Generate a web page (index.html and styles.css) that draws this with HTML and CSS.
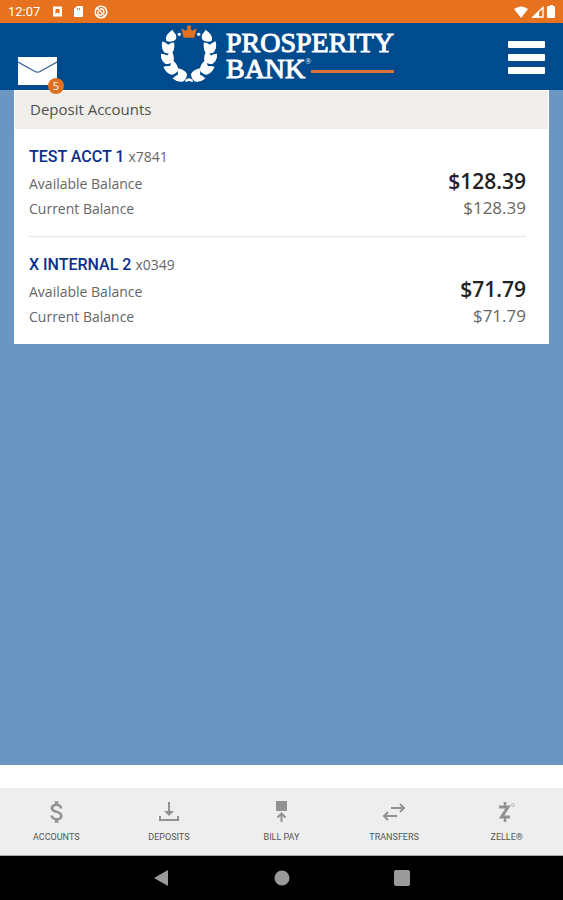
FILE: index.html
```html
<!DOCTYPE html>
<html lang="en">
<head>
<meta charset="utf-8">
<meta name="viewport" content="width=device-width, initial-scale=1">
<title>Prosperity Bank</title>
<link rel="stylesheet" href="styles.css">
</head>
<body>
<div class="status">
  <div class="status-group">
    <span class="clock">12:07</span>
    <svg width="11" height="11" viewBox="0 0 11 11"><path fill="#fff" fill-rule="evenodd" d="M1 .5h9v10H1zM3.500 3v5l2-1.500 2 1.500V3z"/></svg>
    <svg width="11" height="13" viewBox="0 0 11 13"><path fill="#fff" fill-rule="evenodd" d="M4 1h5q1 0 1 1v9q0 1-1 1H2q-1 0-1-1V4zM4 3v2h1V3zM6 3v2h1V3z"/></svg>
    <svg width="14" height="14" viewBox="0 0 14 14" fill="none" stroke="#fff" stroke-width="1.5"><circle cx="7" cy="7" r="5.8"/><path d="M3 3l8 8M4 6v4h4M6 4q4-1 4 4"/></svg>
  </div>
  <div class="status-group signals">
    <svg width="14" height="12" viewBox="0 0 14 12"><path fill="#fff" d="M0 3Q7-2 14 3L7 12z"/></svg>
    <svg width="13" height="12" viewBox="0 0 13 12"><path fill="none" stroke="#fff" stroke-width="1.4" d="M2 11L12 1.500V11z"/><path fill="#fff" d="M1 11.500L8 5v6.500z"/></svg>
    <svg width="9" height="13" viewBox="0 0 9 13"><path fill="#fff" d="M3 0h3v1h1q1 0 1 1v10q0 1-1 1H1q-1 0-1-1V2q0-1 1-1h2z"/></svg>
  </div>
</div>

<header class="header">
  <button class="mail" type="button" aria-label="Messages, 5 unread">
    <svg width="39" height="28" viewBox="0 0 39 28"><path fill="#fff" d="M0 0h39v28H0z"/><path fill="none" stroke="#2f5f98" stroke-width="1.2" d="M0 5l17 9.500q2.500 1.300 5 0L39 5"/></svg>
    <span class="badge">5</span>
  </button>
  <a class="logo" href="#" aria-label="Prosperity Bank">
    <svg class="wreath" width="56" height="59" viewBox="29 14 168 177">
      <defs>
        <path id="leaf" d="M-18-18Q-8-15 0-9Q7-16 17-17Q22 3 14 14Q3 20-10 15Q-22 4-18-18z"/>
        <g id="branch" fill="#fff">
          <path d="M64 28Q66 36 71 39Q79 51 71 60Q59 67 45 62Q38 44 64 28z"/>
          <circle cx="84" cy="42" r="5"/>
          <use href="#leaf" transform="translate(50 82) rotate(4)"/>
          <use href="#leaf" transform="translate(49 114) rotate(-12)"/>
          <use href="#leaf" transform="translate(61 145) rotate(-32)"/>
          <use href="#leaf" transform="translate(88 167) rotate(-62)"/>
          <path d="M102 178l11-5v9l-11 3z"/>
        </g>
      </defs>
      <use href="#branch"/>
      <use href="#branch" transform="translate(226 0) scale(-1 1)"/>
      <path fill="#e4701e" d="M97 52l-7-28 13 7 6-5-3-7 7-5 7 5-3 7 6 5 13-7-7 28z"/>
    </svg>
    <span class="wordmark">
      <span class="word">PROSPERITY</span>
      <span class="word word-line">BANK<sup class="reg">®</sup><span class="rule"></span></span>
    </span>
  </a>
  <button class="menu" type="button" aria-label="Menu">
    <span></span><span></span><span></span>
  </button>
</header>

<main class="main">
  <section class="card">
    <h1 class="card-title">Deposit Accounts</h1>
    <article class="account">
      <h2 class="name"><a href="#">TEST ACCT 1</a> <span class="number">x7841</span></h2>
      <dl class="balances">
        <dt>Available Balance</dt><dd class="available">$128.39</dd>
        <dt>Current Balance</dt><dd>$128.39</dd>
      </dl>
    </article>
    <article class="account">
      <h2 class="name"><a href="#">X INTERNAL 2</a> <span class="number">x0349</span></h2>
      <dl class="balances">
        <dt>Available Balance</dt><dd class="available">$71.79</dd>
        <dt>Current Balance</dt><dd>$71.79</dd>
      </dl>
    </article>
  </section>
</main>

<nav class="tabs">
  <a href="#"><svg width="24" height="24" viewBox="1 2 20 20"><path fill="#929292" d="M11.800 10.900c-2.270-.59-3-1.200-3-2.150 0-1.090 1.010-1.850 2.700-1.850 1.780 0 2.440.85 2.500 2.100h2.210c-.07-1.720-1.120-3.300-3.210-3.810V3h-3v2.160c-1.940.42-3.500 1.680-3.500 3.610 0 2.310 1.910 3.460 4.700 4.130 2.500.6 3 1.480 3 2.410 0 .69-.49 1.790-2.700 1.790-2.060 0-2.870-.92-2.980-2.100h-2.200c.12 2.190 1.760 3.420 3.680 3.830V21h3v-2.150c1.950-.37 3.500-1.500 3.500-3.550 0-2.840-2.430-3.810-4.700-4.400z"/></svg>ACCOUNTS</a>
  <a href="#"><svg width="24" height="24" viewBox="0 0 24 24" fill="none" stroke="#929292" stroke-width="2"><path d="M12 2v11M3 16v4h18v-4"/><path fill="#929292" stroke="none" d="M7 11h10l-5 5z"/></svg>DEPOSITS</a>
  <a href="#"><svg width="24" height="24" viewBox="0 0 24 24" fill="#929292"><path d="M7 1h11v10H7z"/><path fill="none" stroke="#929292" stroke-width="2" d="M12.500 22v-8M8.500 17.500l4-4 4 4"/></svg>BILL PAY</a>
  <a href="#"><svg width="24" height="24" viewBox="0 0 24 24" fill="none" stroke="#929292" stroke-width="2"><path d="M9 8h12M18 4l4 4-4 4M15 16H3M6 12l-4 4 4 4"/></svg>TRANSFERS</a>
  <a href="#"><svg width="24" height="24" viewBox="0 0 24 24" fill="none" stroke="#929292"><path stroke-width="3" d="M4 7h9L6.500 17H15"/><path stroke-width="2.500" d="M10 2v4M10 18v4"/><circle cx="18" cy="5" r="1.500" stroke="#bbb"/></svg>ZELLE®</a>
</nav>

<div class="system">
  <button type="button" aria-label="Back"><svg width="16" height="16" viewBox="0 0 16 16"><path fill="#9a9a9a" d="M0 8L14 0v16z"/></svg></button>
  <button type="button" aria-label="Home"><svg width="16" height="16" viewBox="0 0 16 16"><circle fill="#9a9a9a" cx="8" cy="8" r="7.500"/></svg></button>
  <button type="button" aria-label="Recent apps"><svg width="16" height="16" viewBox="0 0 16 16"><rect fill="#9a9a9a" width="16" height="16" rx="2"/></svg></button>
</div>
</body>
</html>
```
FILE: styles.css
```css
* { box-sizing: border-box; }

body {
  margin: 0;
  min-height: 100vh;
  display: flex;
  flex-direction: column;
  background: #fff;
  font-family: "Open Sans", "Noto Sans", sans-serif;
  color: #666;
}

a { color: inherit; text-decoration: none; }

button {
  padding: 0;
  border: 0;
  background: none;
  font: inherit;
  cursor: pointer;
}

svg { display: block; }

.status {
  display: flex;
  justify-content: space-between;
  height: 23px;
  padding: 0 7px 0 8px;
  background: #e6711e;
  color: #fff;
}

.status-group { display: flex; align-items: center; gap: 10px; }
.signals { gap: 3px; }

.clock {
  margin-right: 2px;
  font: 13px/20px Roboto, sans-serif;
}

.header {
  position: relative;
  z-index: 1;
  display: grid;
  grid-template-columns: 1fr auto 1fr;
  height: 67px;
  padding: 0 18px;
  background: #004b8d;
}

.mail {
  position: relative;
  align-self: end;
  justify-self: start;
  margin-bottom: 5px;
}

.badge {
  position: absolute;
  right: -7px;
  bottom: -9px;
  width: 16px;
  height: 16px;
  border-radius: 50%;
  background: #e0701f;
  color: #fff;
  font: 11px/16px "Open Sans", sans-serif;
  text-align: center;
}

.logo {
  display: flex;
  gap: 9px;
  padding: 2px 8px 0 0;
}

.wordmark {
  display: flex;
  flex-direction: column;
  padding-top: 5px;
}

.word {
  color: #fff;
  font: 28px/26px "Liberation Serif", serif;
  -webkit-text-stroke: 1px #fff;
}

.word-line { display: flex; align-items: center; }

.reg {
  align-self: flex-start;
  font-size: 8px;
  line-height: 12px;
  -webkit-text-stroke: 0;
}

.rule {
  flex: 1;
  height: 3px;
  margin-top: 4px;
  background: #d9753a;
}

.menu {
  display: flex;
  flex-direction: column;
  justify-self: end;
  gap: 6px;
  width: 37px;
  padding-top: 18px;
}

.menu span { height: 7px; border-radius: 1px; background: #fff; }

.main {
  flex: 1;
  padding: 0 14px;
  background: #6b96c2;
}

.card {
  padding: 1px 1px 0;
  background: #fff;
}

.card-title {
  margin: 0;
  padding: 6px 15px 8px;
  background: #efeeea;
  color: #505050;
  font-size: 15px;
  font-weight: 400;
  line-height: 24px;
}

.account {
  margin: 0 22px 0 14px;
  padding: 16px 0 14px;
}

.account + .account { border-top: 1px solid #e6e6e6; }

.name {
  margin: 0 0 3px;
  color: #0a2f8a;
  font: 500 16px/24px Roboto, sans-serif;
}

.number {
  color: #666;
  font: 14px/24px "Open Sans", sans-serif;
}

.balances {
  display: grid;
  grid-template-columns: 1fr auto;
  align-items: start;
  grid-auto-rows: 25px;
  margin: 0;
}

dt { font-size: 14px; line-height: 24px; }
dd { margin: 0; font-size: 17px; line-height: 22px; text-align: right; }
.available { color: #222; font-size: 21px; font-weight: 600; line-height: 18px; }

.tabs {
  display: grid;
  grid-template-columns: repeat(5, 1fr);
  height: 68px;
  margin-top: 23px;
  background: #eee;
  border-bottom: 1px solid #aaa;
}

.tabs a {
  display: flex;
  flex-direction: column;
  align-items: center;
  gap: 7px;
  padding-top: 12px;
  color: #555;
  font: 9px/12px Roboto, sans-serif;
}

.system {
  display: flex;
  justify-content: center;
  align-items: center;
  gap: 104px;
  height: 44px;
  background: #000;
}
```
